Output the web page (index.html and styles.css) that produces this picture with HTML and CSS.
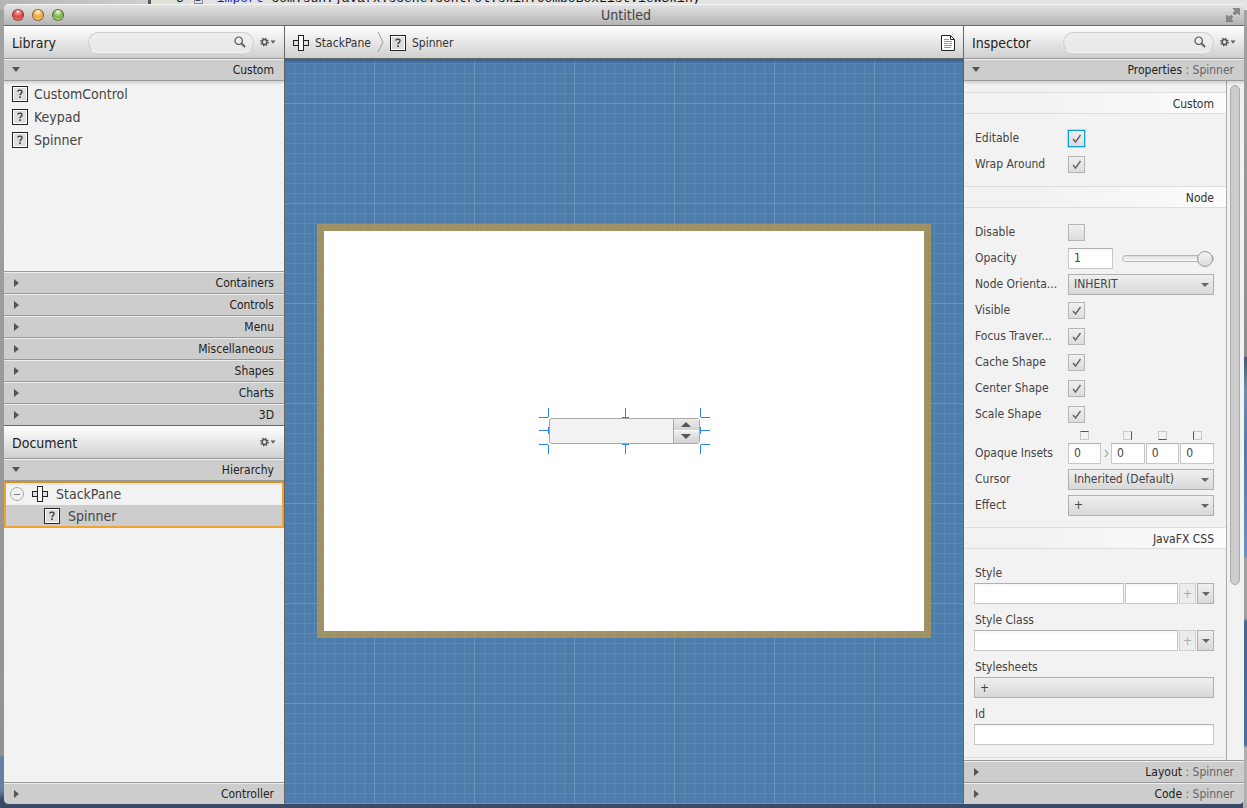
FILE: index.html
```html
<!DOCTYPE html>
<html lang="en">
<head>
<meta charset="utf-8">
<title>Untitled</title>
<link rel="stylesheet" href="styles.css">
</head>
<body>
<svg class="defs" width="0" height="0" aria-hidden="true">
  <symbol id="unknown" viewBox="0 0 16 16">
    <rect x="0.5" y="0.5" width="15" height="15" fill="#fff" stroke="#222"/>
    <rect x="2" y="2" width="12" height="12" fill="#dcdcdc"/>
    <path d="M5.8 5.6C6 3.4 10.2 3.5 10 6C9.9 7.6 8 7.4 8 9.3" fill="none" stroke="#333" stroke-width="1.3"/>
    <rect x="7.2" y="10.4" width="1.6" height="1.6" fill="#333"/>
  </symbol>
  <symbol id="stack" viewBox="0 0 16 16">
    <rect x="0.5" y="5.5" width="15" height="5" fill="#e0e0e0" stroke="#222"/>
    <rect x="5.5" y="0.5" width="5" height="15" fill="#fff" stroke="#222"/>
  </symbol>
  <symbol id="magnifier" viewBox="0 0 12 12">
    <circle cx="4.7" cy="4.7" r="3.7" fill="none" stroke="#555" stroke-width="1.2"/>
    <path d="M7.4 7.4L11 11" stroke="#555" stroke-width="1.8"/>
  </symbol>
  <symbol id="gear" viewBox="0 0 16 10">
    <circle cx="4.5" cy="5" r="2.4" fill="none" stroke="#555" stroke-width="1.5"/>
    <circle cx="4.5" cy="5" r="3.7" fill="none" stroke="#555" stroke-width="1.3" stroke-dasharray="1.45 1.456"/>
    <path d="M10.5 3.5H15.5L13 6.5Z" fill="#555"/>
  </symbol>
</svg>

<div class="backdrop" aria-hidden="true">
  <div class="code"><span class="line-no">3</span><span class="fold">−</span><span><b>import</b> com.sun.javafx.scene.control.skin.ComboBoxListViewSkin;</span></div>
</div>

<div class="window">
  <header class="titlebar">
    <div class="lights">
      <button class="light close" aria-label="Close"></button>
      <button class="light minimize" aria-label="Minimize"></button>
      <button class="light zoom" aria-label="Zoom"></button>
    </div>
    <h1>Untitled</h1>
    <button class="expand" aria-label="Full screen">
      <svg width="14" height="14" viewBox="0 0 14 14"><path d="M7 0.5H13.5V7L11.2 4.7L8.9 7L7 5.1L9.3 2.8Z" fill="#8a8a8a" stroke="#666" stroke-width="0.6"/><path d="M0.5 7L2.8 9.3L4.9 7.2L6.8 9.1L4.7 11.2L7 13.5H0.5Z" fill="#8a8a8a" stroke="#666" stroke-width="0.6"/></svg>
    </button>
  </header>

  <div class="panes">
    <aside class="side">
      <div class="panel-head">
        <h2>Library</h2>
        <label class="search"><input type="text" aria-label="Search library"><svg width="12" height="12"><use href="#magnifier"/></svg></label>
        <button class="gear" aria-label="Library menu"><svg width="16" height="10"><use href="#gear"/></svg></button>
      </div>
      <button class="section open"><span>Custom</span></button>
      <ul class="library-list">
        <li><svg width="16" height="16"><use href="#unknown"/></svg>CustomControl</li>
        <li><svg width="16" height="16"><use href="#unknown"/></svg>Keypad</li>
        <li><svg width="16" height="16"><use href="#unknown"/></svg>Spinner</li>
      </ul>
      <button class="section"><span>Containers</span></button>
      <button class="section"><span>Controls</span></button>
      <button class="section"><span>Menu</span></button>
      <button class="section"><span>Miscellaneous</span></button>
      <button class="section"><span>Shapes</span></button>
      <button class="section"><span>Charts</span></button>
      <button class="section"><span>3D</span></button>
      <div class="panel-head document-head">
        <h2>Document</h2>
        <button class="gear" aria-label="Document menu"><svg width="16" height="10"><use href="#gear"/></svg></button>
      </div>
      <button class="section open"><span>Hierarchy</span></button>
      <div class="hierarchy">
        <ul class="tree">
          <li>
            <button class="collapse" aria-label="Collapse StackPane"></button>
            <svg width="16" height="16"><use href="#stack"/></svg>StackPane
          </li>
          <li class="child selected"><svg width="16" height="16"><use href="#unknown"/></svg>Spinner</li>
        </ul>
      </div>
      <button class="section"><span>Controller</span></button>
    </aside>

    <main class="editor">
      <nav class="crumbs" aria-label="Selection path">
        <button class="crumb"><svg width="16" height="16"><use href="#stack"/></svg>StackPane</button>
        <svg class="chevron" width="7" height="22" viewBox="0 0 7 22"><path d="M1 1L6 11L1 21" fill="none" stroke="#999"/></svg>
        <button class="crumb"><svg width="16" height="16"><use href="#unknown"/></svg>Spinner</button>
        <button class="messages" aria-label="Messages">
          <svg width="14" height="16" viewBox="0 0 14 16"><path d="M0.5 0.5H9.5L13.5 4.5V15.5H0.5Z" fill="#fff" stroke="#222"/><path d="M9.5 0.5V4.5H13.5" fill="none" stroke="#222"/><path d="M3 4.5H8M3 6.5H11M3 8.5H7M8 8.5H11M3 10.5H11M3 12.5H10" stroke="#999"/></svg>
        </button>
      </nav>
      <div class="canvas">
        <div class="stage">
          <div class="spinner">
            <input type="text" aria-label="Spinner value">
            <div class="steps">
              <button class="step up" aria-label="Increase"></button>
              <button class="step down" aria-label="Decrease"></button>
            </div>
            <svg class="handles" width="171" height="46" viewBox="0 0 171 46"><path d="M0 9.5H9M9.5 0V9M162 9.5H171M161.5 0V9M0 36.5H9M9.5 37V46M162 36.5H171M161.5 37V46M86.5 0V10M83 9.5H90M86.5 36V46M83 36.5H90M0 22.5H10M9.5 19V26M161 22.5H171M161.5 19V26" fill="none" stroke="#2a83f0"/></svg>
          </div>
        </div>
      </div>
    </main>

    <aside class="side inspector">
      <div class="panel-head">
        <h2>Inspector</h2>
        <label class="search"><input type="text" aria-label="Search properties"><svg width="12" height="12"><use href="#magnifier"/></svg></label>
        <button class="gear" aria-label="Inspector menu"><svg width="16" height="10"><use href="#gear"/></svg></button>
      </div>
      <button class="section open"><span>Properties <i>: Spinner</i></span></button>
      <div class="scroller">
        <form class="properties">
          <h3>Custom</h3>
          <div class="rows">
            <label for="editable">Editable</label><input class="check focused" type="checkbox" id="editable" checked>
            <label for="wrap">Wrap Around</label><input class="check" type="checkbox" id="wrap" checked>
          </div>
          <h3>Node</h3>
          <div class="rows node-rows">
            <label for="disable">Disable</label><input class="check" type="checkbox" id="disable">
            <label for="opacity">Opacity</label>
            <div class="opacity"><input class="field" type="text" id="opacity" value="1"><input class="slider" type="range" min="0" max="1" step="0.01" value="1" aria-label="Opacity"></div>
            <label for="orientation">Node Orienta...</label><span class="drop"><select id="orientation"><option>INHERIT</option></select></span>
            <label for="visible">Visible</label><input class="check" type="checkbox" id="visible" checked>
            <label for="focus">Focus Traver...</label><input class="check" type="checkbox" id="focus" checked>
            <label for="cache">Cache Shape</label><input class="check" type="checkbox" id="cache" checked>
            <label for="center">Center Shape</label><input class="check" type="checkbox" id="center" checked>
            <label for="scale">Scale Shape</label><input class="check" type="checkbox" id="scale" checked>
            <div class="insets sides">
              <span class="edge top"></span><span></span><span class="edge right"></span><span class="edge bottom"></span><span class="edge left"></span>
            </div>
            <label for="inset-top">Opaque Insets</label>
            <div class="insets">
              <input class="field" type="text" id="inset-top" value="0">
              <svg width="5" height="9" viewBox="0 0 5 9"><path d="M1 1L4 4.5L1 8" fill="none" stroke="#777"/></svg>
              <input class="field" type="text" value="0" aria-label="Right inset">
              <input class="field" type="text" value="0" aria-label="Bottom inset">
              <input class="field" type="text" value="0" aria-label="Left inset">
            </div>
            <label for="cursor">Cursor</label><span class="drop"><select id="cursor"><option>Inherited (Default)</option></select></span>
            <label for="effect">Effect</label><span class="drop"><select id="effect"><option>+</option></select></span>
          </div>
          <h3>JavaFX CSS</h3>
          <div class="stacked">
            <label for="style">Style</label>
            <div class="line">
              <input class="field grow" type="text" id="style"><input class="field value" type="text" aria-label="Style value">
              <button type="button" class="btn add" disabled>+</button><button type="button" class="btn more" aria-label="Style options"></button>
            </div>
            <label for="style-class">Style Class</label>
            <div class="line">
              <input class="field grow" type="text" id="style-class">
              <button type="button" class="btn add" disabled>+</button><button type="button" class="btn more" aria-label="Style class options"></button>
            </div>
            <label for="stylesheets">Stylesheets</label>
            <div class="line"><button type="button" class="btn wide" id="stylesheets">+</button></div>
            <label for="node-id">Id</label>
            <div class="line"><input class="field grow" type="text" id="node-id"></div>
          </div>
        </form>
        <div class="track"><div class="thumb"></div></div>
      </div>
      <button class="section"><span>Layout <i>: Spinner</i></span></button>
      <button class="section"><span>Code <i>: Spinner</i></span></button>
    </aside>
  </div>
</div>
</body>
</html>
```

FILE: styles.css
```css
* { box-sizing: border-box; }

html, body { height: 100%; }

body {
  margin: 0;
  padding: 4px 3px 4px 4px;
  overflow: hidden;
  background:
    linear-gradient(#a2a2a2 0, #949290 755px, #6580a2 757px, #6580a2 790px, transparent 800px) 0 0 / 4px 100% no-repeat,
    linear-gradient(#a2a2a2 0, #8c8c8c 356px, #46566e 358px, #6d8cae 390px, #5578a8 450px, #6b8fc0 555px, #a0a0a0 560px, #a0a0a0 618px, #46658f 622px, #4d6f9d 745px, #b0b0b0 748px) 100% 0 / 4px 100% no-repeat,
    #3a4a66;
  color: #444;
  font: 12px/16px "DejaVu Sans Condensed", "DejaVu Sans", sans-serif;
}

button, input, select { margin: 0; font: inherit; color: inherit; }
button { padding: 0; border: 0; background: none; }
ul { margin: 0; padding: 0; list-style: none; }
h1, h2, h3 { margin: 0; font-weight: normal; }
svg { display: block; flex: none; }
.defs { position: absolute; }

/* Strip of the code editor lying behind the window */
.backdrop {
  position: absolute;
  top: 0;
  left: 0;
  right: 0;
  height: 10px;
  overflow: hidden;
  background: linear-gradient(to right, #b4b4b4 0, #cfcfcf 148px, #555 148px, #555 151px, #dfdfd8 151px, #dfdfd8 190px, #e3e3e3 190px);
}
.code {
  display: flex;
  gap: 10px;
  margin: -9px 0 0 176px;
  color: #111;
  font: 13px/16px "Liberation Mono", monospace;
  white-space: pre;
}
.code b { color: #1a1ad0; font-weight: normal; }
.fold { width: 9px; height: 13px; border: 1px solid #888; font-size: 10px; line-height: 20px; }
.code span:last-child { padding-left: 4px; }

.window {
  position: relative;
  display: flex;
  flex-direction: column;
  height: 100%;
  overflow: hidden;
  border-radius: 5px;
  background: #f2f2f2;
}

.titlebar {
  display: grid;
  grid-template-columns: 1fr auto 1fr;
  align-items: center;
  flex: none;
  height: 22px;
  padding: 0 4px 0 8px;
  border-top: 1px solid #f2f2f2;
  border-bottom: 1px solid #6a6a6a;
  background: linear-gradient(#e2e2e2, #b4b4b4);
}
.titlebar h1 { color: #444; font-size: 14px; line-height: 20px; }
.lights { display: flex; gap: 8px; }
.light {
  width: 12px;
  height: 12px;
  border: 1px solid rgba(60, 40, 30, 0.6);
  border-radius: 50%;
}
.close { background: radial-gradient(circle at 50% 18%, #fff 0, #f08080 22%, #e0443e 55%, #ff9a90 100%); }
.minimize { background: radial-gradient(circle at 50% 18%, #fff 0, #f8cf88 22%, #eda735 55%, #ffe58c 100%); }
.zoom { background: radial-gradient(circle at 50% 18%, #fff 0, #b5dc95 22%, #74b548 55%, #ccf29c 100%); }
.expand { justify-self: end; }

.panes { display: flex; flex: 1; min-height: 0; }

.side {
  display: flex;
  flex-direction: column;
  flex: none;
  width: 281px;
  min-height: 0;
  border-right: 1px solid #666;
}
.inspector { border-right: 0; border-left: 1px solid #666; }

.panel-head {
  display: flex;
  align-items: center;
  flex: none;
  height: 32px;
  padding: 0 8px;
  background: linear-gradient(#fff, #cfcfcf);
}
.panel-head h2 { flex: 1; padding-top: 2px; color: #222; font-size: 14px; line-height: 18px; }
.document-head { height: 33px; border-top: 1px solid #666; }

.search {
  display: flex;
  align-items: center;
  width: 166px;
  height: 21px;
  padding: 0 7px 0 10px;
  border: 1px solid #cfcfcf;
  border-bottom-color: #f5f5f5;
  border-radius: 11px;
  background: rgba(236, 236, 236, 0.8);
}
.inspector .search { width: 151px; }
.search input { flex: 1; min-width: 0; padding: 0; border: 0; outline: 0; background: none; }
.gear { margin-left: 6px; }

.section {
  display: flex;
  align-items: center;
  justify-content: space-between;
  flex: none;
  width: 100%;
  height: 22px;
  padding: 0 10px;
  border-top: 1px solid #999;
  background: #cdcdcd;
  box-shadow: inset 0 1px #eee;
  color: #222;
}
.section::before {
  content: "";
  border: solid transparent;
  border-width: 4px 0 4px 5px;
  border-left-color: #555;
}
.section i { color: #666; font-style: normal; }
.section.open { position: relative; height: 23px; border-bottom: 1px solid #999; box-shadow: inset 0 1px #eee, 0 2px 3px rgba(0, 0, 0, 0.15); }
.section.open::before { margin-left: -2px; border-width: 5px 4px 0; border-color: #555 transparent transparent; }

.library-list {
  flex: none;
  height: 190px;
  padding: 1px 8px;
  background: #f2f2f2;
}
.library-list li { display: flex; align-items: center; gap: 6px; height: 23px; font-size: 14px; }

.hierarchy { flex: 1; min-height: 0; background: #f2f2f2; }
.tree { border: 2px solid #eda52f; }
.tree li { display: flex; align-items: center; gap: 8px; height: 22px; padding-left: 4px; font-size: 14px; }
.tree .collapse {
  display: grid;
  place-items: center;
  width: 14px;
  height: 14px;
  border: 1px solid #aaa;
  border-radius: 50%;
}
.collapse::before { content: ""; width: 6px; height: 1px; background: #777; }
.tree .child { padding-left: 38px; }
.tree .selected { height: 21px; background: #cdcdcd; }

.editor { display: flex; flex: 1; flex-direction: column; min-width: 0; }
.crumbs {
  display: flex;
  align-items: center;
  flex: none;
  gap: 6px;
  height: 33px;
  padding: 0 8px;
  border-bottom: 1px solid #666;
  background: linear-gradient(#fff, #cfcfcf);
  color: #333;
}
.crumb { display: flex; align-items: center; gap: 6px; padding-top: 1px; }
.messages { margin-left: auto; padding-top: 1px; }

.canvas {
  display: grid;
  place-items: center;
  flex: 1;
  min-height: 0;
  padding-bottom: 2px;
  background:
    linear-gradient(rgba(30, 60, 100, 0.5), transparent) 0 0 / 100% 5px no-repeat,
    linear-gradient(to right, #6b95bd 1px, transparent 1px) 89px 0 / 100px 100px,
    linear-gradient(#6b95bd 1px, transparent 1px) 0 44px / 100px 100px,
    linear-gradient(to right, #5b88b3 1px, transparent 1px) 9px 0 / 10px 10px,
    linear-gradient(#5b88b3 1px, transparent 1px) 0 4px / 10px 10px,
    #4e7cab;
}
.stage {
  display: grid;
  place-items: center;
  width: 614px;
  height: 414px;
  border: 7px solid rgba(188, 152, 76, 0.75);
  background: #fff;
  background-clip: padding-box;
}

.spinner {
  position: relative;
  display: flex;
  width: 151px;
  height: 26px;
  border: 1px solid #a9a9a9;
  border-radius: 3px;
  background: #f2f2f2;
}
.spinner input { flex: 1; min-width: 0; padding: 0 6px; border: 0; outline: 0; background: none; }
.steps { display: flex; flex-direction: column; width: 26px; border-left: 1px solid #a9a9a9; }
.step { display: grid; place-items: center; flex: 1; background: linear-gradient(#ededed, #d2d2d2); }
.step::before { content: ""; border: solid transparent; border-width: 0 5px 5px; border-bottom-color: #555; }
.step.down { border-top: 1px solid #fff; }
.step.down::before { border-width: 5px 5px 0; border-top-color: #555; }
.handles { position: absolute; top: -11px; left: -11px; }

.scroller { display: flex; flex: 1; min-height: 0; background: #f2f2f2; }
.properties { flex: 1; min-width: 0; padding-top: 11px; overflow: hidden; }
.properties h3 {
  height: 22px;
  padding: 1px 12px 0;
  border: solid #dedede;
  border-width: 1px 0;
  background: linear-gradient(to right, #f2f2f2 30%, #fcfcfc);
  color: #333;
  font-size: 12px;
  line-height: 21px;
  text-align: right;
}
.rows {
  display: grid;
  grid-template-columns: 94px minmax(0, 1fr);
  grid-auto-rows: 26px;
  align-items: center;
  padding: 11px 12px 9px 10px;
}
.node-rows { grid-template-rows: repeat(8, 26px) 13px; }
.rows label { padding-left: 1px; white-space: nowrap; }

.check {
  appearance: none;
  width: 17px;
  height: 17px;
  border: 1px solid #b5b5b5;
  background: linear-gradient(#f0f0f0, #dcdcdc);
}
.check:checked {
  background:
    url("data:image/svg+xml,%3Csvg xmlns='http://www.w3.org/2000/svg' width='15' height='15'%3E%3Cpath d='M4 8L6.5 11L11.5 4' fill='none' stroke='%23666' stroke-width='1.4'/%3E%3C/svg%3E") center no-repeat,
    linear-gradient(#f0f0f0, #dcdcdc);
}
.check.focused { border-color: #0b9fd8; box-shadow: 0 0 0 1px #a8dcf0; }

.field {
  min-width: 0;
  height: 21px;
  padding: 0 5px;
  border: 1px solid #c8c8c8;
  border-top-color: #b0b0b0;
  border-radius: 0;
  outline: 0;
  background: linear-gradient(#f6f6f6, #fff 4px);
}
.opacity { display: flex; align-items: center; gap: 9px; }
.opacity .field { width: 45px; }
.slider { appearance: none; flex: 1; min-width: 0; height: 16px; background: none; }
.slider::-webkit-slider-runnable-track { height: 7px; border: 1px solid #b5b5b5; border-radius: 4px; background: linear-gradient(#dedede, #fafafa); }
.slider::-webkit-slider-thumb { appearance: none; width: 16px; height: 16px; margin-top: -5px; border: 1px solid #999; border-radius: 50%; background: linear-gradient(#f4f4f4, #dcdcdc); }

.drop { position: relative; display: flex; }
.drop::after, .more::before {
  content: "";
  border: solid transparent;
  border-width: 4px 4px 0;
  border-top-color: #666;
}
.drop::after { position: absolute; top: 9px; right: 5px; pointer-events: none; }
.drop select, .btn {
  height: 21px;
  border: 1px solid #b0b0b0;
  border-radius: 0;
  background: linear-gradient(#f0f0f0, #d8d8d8);
}
.drop select { appearance: none; flex: 1; min-width: 0; padding: 0 20px 0 5px; outline: 0; }

.insets { display: grid; grid-template-columns: 33px 8px repeat(3, minmax(0, 1fr)); gap: 1px; align-items: center; justify-items: center; }
.insets .field { width: 100%; }
.sides { grid-column: 2; align-self: end; }
.edge { width: 9px; height: 9px; border: 1px solid #c8c8c8; }
.edge.top { border-top-color: #555; }
.edge.right { border-right-color: #555; }
.edge.bottom { border-bottom-color: #555; }
.edge.left { border-left-color: #555; }

.stacked { padding: 16px 12px 4px 10px; border-bottom: 1px solid #dedede; }
.stacked label { display: block; padding-left: 1px; }
.line { display: flex; gap: 1px; margin: 2px 0 8px; }
.grow { flex: 1; }
.value { width: 53px; }
.btn { display: grid; place-items: center; width: 17px; }
.add:disabled { border-color: #d2d2d2; background: #ececec; color: #aaa; }
.btn.wide { flex: 1; justify-items: start; padding-left: 5px; }

.track { display: flex; width: 18px; padding: 4px 4px 0 3px; border-left: 1px solid #aaa; }
.thumb { flex: 1; height: 74%; border: 1px solid #aaa; border-radius: 5px; background: #cdcdcd; }
```
